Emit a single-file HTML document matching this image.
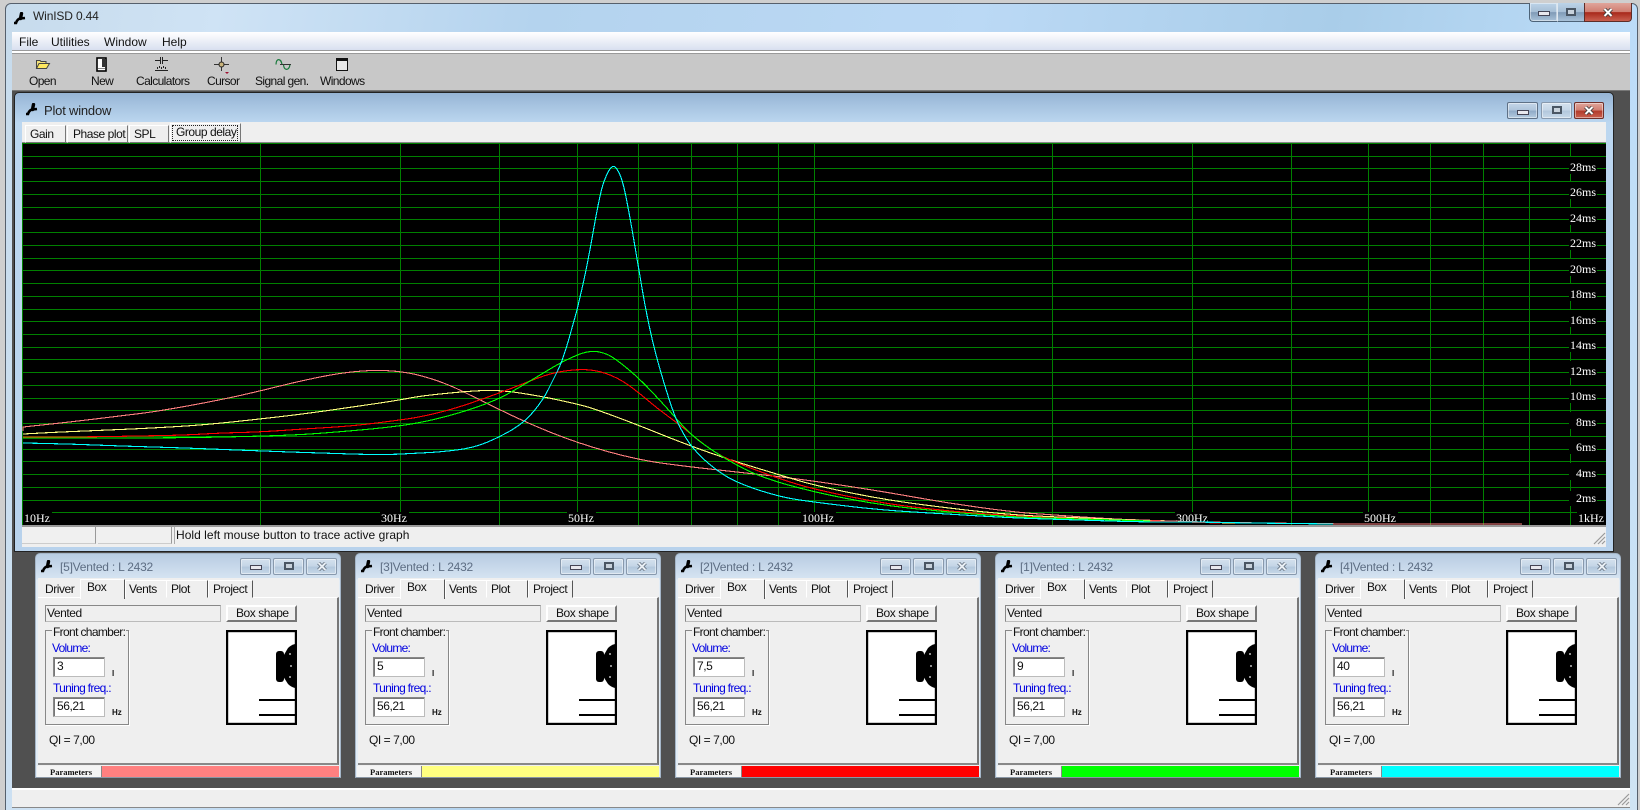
<!DOCTYPE html>
<html><head><meta charset="utf-8"><title>WinISD 0.44</title>
<style>
html,body{margin:0;padding:0;background:#cfcfcf;width:1640px;height:810px;overflow:hidden}
body{position:relative;font-family:"Liberation Sans",sans-serif;font-size:11px;color:#111}
div,span,svg{position:absolute;box-sizing:border-box}
.t{white-space:nowrap;line-height:14px;letter-spacing:-.2px}
#main{left:5px;top:3px;width:1633px;height:810px;border:1px solid #56606c;border-radius:6px 6px 0 0;background:linear-gradient(100deg,#c7dbec 0,#cfe3f5 12%,#b4d3ee 30%,#bbd9f5 55%,#a9cde9 75%,#bcdcf8 92%,#d0e4f4 100%)}
#menu{left:12px;top:32px;width:1618px;height:19px;background:linear-gradient(#fff,#f3f5fa 30%,#d6deef);}
#lines{left:12px;top:50px;width:1618px;height:4px;background:#fff;border-top:1px solid #9a9a9a;border-bottom:1px solid #9a9a9a}
#tool{left:12px;top:54px;width:1618px;height:37px;background:#c8c8c8;border-bottom:1px solid #777}
#mdi{left:12px;top:91px;width:1618px;height:697px;background:#505050}
#status{left:12px;top:788px;width:1618px;height:20px;background:#efefef;border-top:2px solid #fff;border-bottom:1px solid #888}
.menu{font-size:12px;top:35px;letter-spacing:0}
.lab{top:74px;font-size:12px;letter-spacing:-.6px}
#plot{left:14px;top:92px;width:1600px;height:460px;border:1px solid #222;border-radius:5px 5px 0 0;background:linear-gradient(#96b4d4 0,#a6c3e0 12px,#bcd7f0 30px,#b8d2ec 100%)}
.tab{background:#efefef;border:1px solid;border-color:#fff #777 #777 #fff}
.tb{border:1px solid #5f7186;border-radius:2px;background:linear-gradient(#c4d6e8,#aec4db 50%,#8ea9c6 52%,#b4cbe0);box-shadow:inset 0 0 0 1px rgba(255,255,255,.45)}
.tb.c{background:linear-gradient(#e0a59b,#cf7d70 50%,#b23a2a 52%,#c9604f);border-color:#70302a}
.tb.i{border-color:#8899ad;background:linear-gradient(#d4e1ee,#c4d5e6 50%,#b2c7dc 52%,#c8d9e9)}
.g{width:12px;height:5px;left:50%;margin-left:-6px;background:#e8e8ee;border:1px solid #445}
.m{width:10px;height:8px;left:50%;margin-left:-5px;background:#c8d2dc;border:2px solid #4a5664}
.ix{left:50%;margin-left:-5px;width:10px;height:9px}
.w{top:553px;width:306px;height:225px;border-radius:5px 5px 0 0;background:linear-gradient(#b8cce2 0,#d6e4f2 25px,#e2ecf5 26px,#e2ecf5 100%);border:1px solid #a5b6c8;border-bottom-color:#8a97a5}
.in{left:2px;top:24px;width:301px;height:198px;background:#efefef;}
.ttl{left:24px;top:6px;font-size:12px;color:#5d6d83;letter-spacing:-.22px}
.wt{border:1px solid;border-color:#fff #555 transparent #fff;background:#efefef}
.tx{font-size:12px;letter-spacing:-.45px}
.bl{color:#0000e0}
.fld{border:1px solid #888;border-right-color:#bbb;border-bottom-color:#bbb;background:#fff;box-shadow:inset 1px 1px 0 #777}
.s{font:bold 8px/8px "Liberation Sans",sans-serif;letter-spacing:0}
.pm{left:14px;top:214px;font:bold 8.5px/9px "Liberation Serif",serif;white-space:nowrap}
.p{left:66px;top:212px;width:237px;height:11px}
.pl{left:1px;top:212px;width:65px;height:11px;background:#f4f4f4;border-right:1px solid #888}
</style></head>
<body>
<svg width="0" height="0" style="left:0;top:0"><defs>
<symbol id="wr" viewBox="0 0 13 13"><path d="M1 11H3Q4 7.5 7 6.5L12 6" fill="none" stroke="#000" stroke-width="2.6"/><path d="M7.5 6.5L8.5 1.5" stroke="#000" stroke-width="3.4" stroke-linecap="round"/></symbol>
<symbol id="xw" viewBox="0 0 10 9"><path d="M1.5 1L8.5 8M8.5 1L1.5 8" stroke="#333" stroke-width="3.6" fill="none"/><path d="M1.5 1L8.5 8M8.5 1L1.5 8" stroke="#fff" stroke-width="2" fill="none"/></symbol>
<symbol id="xi" viewBox="0 0 10 9"><path d="M1.5 1L8.5 8M8.5 1L1.5 8" stroke="#5a6878" stroke-width="3.6" fill="none"/><path d="M1.5 1L8.5 8M8.5 1L1.5 8" stroke="#e8eef4" stroke-width="2" fill="none"/></symbol>
<symbol id="box" viewBox="0 0 71 95"><rect x="1" y="1" width="69" height="93" fill="#fff" stroke="#000" stroke-width="2.4"/><rect x="50" y="21" width="8" height="31" rx="3" fill="#000"/><path d="M55 30L62 18Q65 15 69 14V58Q65 57 62 54L55 43Z" fill="#000"/><circle cx="64" cy="24" r="1" fill="#bbb"/><circle cx="65" cy="36" r="1" fill="#bbb"/><circle cx="64" cy="47" r="1" fill="#bbb"/><path d="M33 70H69M33 85H69" stroke="#000" stroke-width="2"/></symbol>
</defs></svg>
<div id="main"></div>
<div style="left:1529px;top:3px;width:28px;height:19px;border:1px solid #4d6378;border-top:0;border-right:0;border-radius:0 0 0 4px;background:linear-gradient(#bcd3e8,#a6bed5 50%,#7f9ab6 52%,#a9c2d9);box-shadow:inset 0 0 0 1px rgba(255,255,255,.45)"><div class="g" style="top:8px"></div></div>
<div style="left:1557px;top:3px;width:27px;height:19px;border-bottom:1px solid #4d6378;border-left:1px solid #dfe8f0;background:linear-gradient(#bcd3e8,#a6bed5 50%,#7f9ab6 52%,#a9c2d9)"><div class="m" style="top:5px"></div></div>
<div style="left:1584px;top:3px;width:48px;height:19px;border:1px solid #5d2d28;border-top:0;border-radius:0 0 4px 0;background:linear-gradient(#e0a59b,#cf7d70 50%,#a8281a 52%,#c9604f)"><svg class="ix" style="top:5px"><use href="#xw"/></svg></div>
<svg style="left:13px;top:12px" width="13" height="13"><use href="#wr"/></svg>
<div class="t" style="left:33px;top:9px;font-size:12px;color:#222;letter-spacing:-.15px">WinISD 0.44</div>

<div id="menu"></div><div id="lines"></div><div id="tool"></div><div id="mdi"></div><div id="status"></div>
<svg style="left:1617px;top:793px" width="13" height="13" viewBox="0 0 13 13"><path d="M12 1L1 12M12 5L5 12M12 9L9 12" stroke="#999" stroke-width="1.2"/></svg>
<div class="t menu" style="left:19px">File</div>
<div class="t menu" style="left:51px">Utilities</div>
<div class="t menu" style="left:104px">Window</div>
<div class="t menu" style="left:162px">Help</div>

<svg style="left:34px;top:58px" width="17" height="13" viewBox="0 0 17 13"><path d="M2.5 10.5V2.5H6L7 3.5H12V5.5" fill="#f4e27a" stroke="#444"/><path d="M2.5 10.5L5 5.5H15.5L12.5 10.5Z" fill="#ffe860" stroke="#444"/></svg>
<svg style="left:96px;top:57px" width="11" height="15" viewBox="0 0 11 15"><rect x="1" y="1" width="9" height="13" fill="#fff" stroke="#000" stroke-width="1.6"/><rect x="6" y="2" width="3" height="8" fill="#333"/><rect x="2" y="11" width="7" height="1" fill="#888"/></svg>
<svg style="left:154px;top:57px" width="15" height="14" viewBox="0 0 15 14" shape-rendering="crispEdges"><path d="M1 3.5H6M9 3.5H14M6.5 0V7M8.5 0V7M1 13.5H14" stroke="#222" fill="none"/><path d="M3 11h1M5 10h1M7 11h1M9 10h1M11 11h1" stroke="#222" stroke-width="2"/></svg>
<svg style="left:214px;top:57px" width="16" height="17" viewBox="0 0 16 17"><path d="M7.5 0V14M0 7.5H15" stroke="#333"/><circle cx="7.5" cy="7.5" r="2.5" fill="#c9b37a" stroke="#222"/><path d="M11 15h4l-2 2z" fill="#a01030"/></svg>
<svg style="left:275px;top:58px" width="16" height="13" viewBox="0 0 16 13"><path d="M1 6.5C1 0 6 0 7 6.5M8.5 6.5C9 13 14 13 15 6.5" fill="none" stroke="#187a3c" stroke-width="1.2"/><path d="M5 6.5H16" stroke="#333"/></svg>
<svg style="left:336px;top:58px" width="13" height="14" viewBox="0 0 13 14" shape-rendering="crispEdges"><rect x=".5" y=".5" width="11" height="12" fill="#e8e8e8" stroke="#111"/><rect x="1" y="1" width="10" height="2" fill="#111"/></svg>
<div class="t lab" style="left:29px">Open</div>
<div class="t lab" style="left:91px">New</div>
<div class="t lab" style="left:136px">Calculators</div>
<div class="t lab" style="left:207px">Cursor</div>
<div class="t lab" style="left:255px">Signal gen.</div>
<div class="t lab" style="left:320px">Windows</div>

<div id="plot"></div>
<svg style="left:25px;top:103px" width="13" height="13"><use href="#wr"/></svg>
<div class="t" style="left:44px;top:104px;font-size:13px;color:#222;letter-spacing:-.2px">Plot window</div>
<div class="tb" style="left:1507px;top:102px;width:31px;height:17px"><div class="g" style="top:7px"></div></div>
<div class="tb i" style="left:1541px;top:102px;width:31px;height:17px"><div class="m" style="top:3px"></div></div>
<div class="tb c" style="left:1574px;top:102px;width:30px;height:17px"><svg class="ix" style="top:3px"><use href="#xw"/></svg></div>

<div style="left:22px;top:122px;width:1584px;height:21px;background:#efefef;border-bottom:1px solid #888"></div>
<div class="tab" style="left:25px;top:125px;width:41px;height:18px"></div>
<div class="tab" style="left:67px;top:125px;width:61px;height:18px"></div>
<div class="tab" style="left:129px;top:125px;width:40px;height:18px"></div>
<div class="tab" style="left:170px;top:123px;width:71px;height:20px"></div>
<div style="left:172px;top:125px;width:66px;height:16px;border:1px dotted #222"></div>
<div class="t tx" style="left:30px;top:127px">Gain</div>
<div class="t tx" style="left:73px;top:127px">Phase plot</div>
<div class="t tx" style="left:134px;top:127px">SPL</div>
<div class="t tx" style="left:176px;top:125px">Group delay</div>

<svg style="left:0;top:0" width="1640" height="810" viewBox="0 0 1640 810">
<rect x="22" y="143" width="1584" height="382" fill="#000"/>
<g shape-rendering="crispEdges" stroke="#008000" stroke-width="1" fill="none">
<path d="M22 143.5H1606M22 156.5H1606M22 168.5H1606M22 181.5H1606M22 194.5H1606M22 207.5H1606M22 219.5H1606M22 232.5H1606M22 245.5H1606M22 258.5H1606M22 270.5H1606M22 283.5H1606M22 296.5H1606M22 309.5H1606M22 321.5H1606M22 334.5H1606M22 347.5H1606M22 359.5H1606M22 372.5H1606M22 385.5H1606M22 398.5H1606M22 410.5H1606M22 423.5H1606M22 436.5H1606M22 449.5H1606M22 461.5H1606M22 474.5H1606M22 487.5H1606M22 500.5H1606M22 512.5H1606"/>
<path d="M22.5 143V525M260.5 143V525M400.5 143V525M499.5 143V525M577.5 143V525M638.5 143V525M691.5 143V525M737.5 143V525M778.5 143V525M814.5 143V525M1052.5 143V525M1192.5 143V525M1291.5 143V525M1368.5 143V525M1430.5 143V525M1483.5 143V525M1529.5 143V525M1570.5 143V525"/>
</g>
<g fill="#000">
<rect x="1569" y="157" width="28" height="17"/><rect x="1569" y="182" width="28" height="17"/><rect x="1569" y="208" width="28" height="17"/><rect x="1569" y="233" width="28" height="17"/><rect x="1569" y="259" width="28" height="17"/><rect x="1569" y="284" width="28" height="17"/><rect x="1569" y="310" width="28" height="17"/><rect x="1569" y="335" width="28" height="17"/><rect x="1569" y="361" width="28" height="17"/><rect x="1569" y="386" width="28" height="17"/><rect x="1569" y="412" width="28" height="17"/><rect x="1569" y="437" width="28" height="17"/><rect x="1569" y="463" width="28" height="17"/><rect x="1569" y="491" width="28" height="15"/>
<rect x="23" y="512" width="29" height="13"/><rect x="380" y="512" width="29" height="13"/><rect x="567" y="512" width="29" height="13"/><rect x="801" y="512" width="35" height="13"/><rect x="1175" y="512" width="35" height="13"/><rect x="1363" y="512" width="35" height="13"/><rect x="1577" y="512" width="29" height="13"/>
</g>
<g font-family="'Liberation Serif',serif" font-size="12" fill="#fff">
<text x="1596" y="171" text-anchor="end">28ms</text><text x="1596" y="196" text-anchor="end">26ms</text><text x="1596" y="222" text-anchor="end">24ms</text><text x="1596" y="247" text-anchor="end">22ms</text><text x="1596" y="273" text-anchor="end">20ms</text><text x="1596" y="298" text-anchor="end">18ms</text><text x="1596" y="324" text-anchor="end">16ms</text><text x="1596" y="349" text-anchor="end">14ms</text><text x="1596" y="375" text-anchor="end">12ms</text><text x="1596" y="400" text-anchor="end">10ms</text><text x="1596" y="426" text-anchor="end">8ms</text><text x="1596" y="451" text-anchor="end">6ms</text><text x="1596" y="477" text-anchor="end">4ms</text><text x="1596" y="502" text-anchor="end">2ms</text>
<text x="24" y="522">10Hz</text><text x="381" y="522">30Hz</text><text x="568" y="522">50Hz</text><text x="802" y="522">100Hz</text><text x="1176" y="522">300Hz</text><text x="1364" y="522">500Hz</text><text x="1578" y="522">1kHz</text>
</g>
<g fill="none" stroke-width="1.1" shape-rendering="crispEdges">
<path stroke="#ff8080" d="M23 431V427L46.5 424.5Q70 422 95 419Q120 416 140 413.5Q160 411 190 405.5Q220 400 240 395.5Q260 391 280 386Q300 381 320 377Q340 373 356.5 371.5Q373 370 385 370.5Q397 371 408.5 373Q420 375 435 380Q450 385 465 392.5Q480 400 502.5 411Q525 422 551 432.5Q577 443 607.5 451.5Q638 460 664.5 463.5Q691 467 714 469.5Q737 472 768.5 475.5Q800 479 840 485Q880 491 913.5 497Q947 503 980 507.5Q1013 512 1033 513.5Q1053 515 1083 517Q1113 519 1126.5 519.5Q1140 520 1170 521Q1200 522 1230 522.5Q1260 523 1300 523.5Q1340 524 1400 524L1522 524"/>
<path stroke="#ffff80" d="M23 434L41.5 433Q60 432 85 431Q110 430 131.5 429Q153 428 178 426.5Q203 425 231.5 422Q260 419 281.5 416.5Q303 414 328 410.5Q353 407 376.5 403.5Q400 400 410 398Q420 396 445 393.5Q470 391 485 390.5Q500 390 520 393Q540 396 558.5 400Q577 404 586 406.5Q595 409 616.5 417Q638 425 659 433.5Q680 442 703.5 450.5Q727 459 753.5 467Q780 475 796.5 480Q813 485 846.5 492Q880 499 913.5 503.5Q947 508 980 511.5Q1013 515 1046.5 516.5Q1080 518 1106.5 519Q1133 520 1156.5 521Q1180 522 1210 522.5L1240 523"/>
<path stroke="#ff0000" d="M23 437L51.5 437Q80 437 111.5 436.5Q143 436 165 435.5Q187 435 203.5 434Q220 433 240 432.5Q260 432 281.5 430.5Q303 429 328 427.5Q353 426 376.5 423Q400 420 410 418.5Q420 417 435 413.5Q450 410 465 405Q480 400 495 394.5Q510 389 525 383Q540 377 548.5 374.5Q557 372 568.5 370.5Q580 369 590 370Q600 371 610 375Q620 379 629 385.5Q638 392 648 400.5Q658 409 669 417Q680 425 696.5 438.5Q713 452 725 457.5Q737 463 758.5 471Q780 479 796.5 484Q813 489 846.5 496Q880 503 913.5 507Q947 511 980 513.5Q1013 516 1046.5 517.5Q1080 519 1115 520Q1150 521 1185 522L1220 523"/>
<path stroke="#00ff00" d="M23 438L91.5 438Q160 438 195 437.5Q230 437 263.5 436Q297 435 317 433.5Q337 432 360 430Q383 428 401.5 425.5Q420 423 440 418Q460 413 478.5 406.5Q497 400 508.5 393.5Q520 387 530 381Q540 375 550 369Q560 363 568.5 359Q577 355 581.5 353.5Q586 352 590.5 351.5Q595 351 599.5 352Q604 353 608.5 355Q613 357 625.5 367Q638 377 652.5 392.5Q667 408 673.5 415.5Q680 423 688.5 431.5Q697 440 712 450Q727 460 743.5 468.5Q760 477 786.5 484.5Q813 492 846.5 498.5Q880 505 913.5 508.5Q947 512 980 514.5Q1013 517 1046.5 518Q1080 519 1115 520L1150 521"/>
<path stroke="#00ffff" d="M23 443L46.5 443.5Q70 444 95 445Q120 446 153.5 447Q187 448 223.5 449.5Q260 451 290 452Q320 453 351.5 454Q383 455 401.5 454Q420 453 430 452.5Q440 452 456.5 450Q473 448 486.5 442.5Q500 437 512.5 429.5Q525 422 534 411Q543 400 548 390Q553 380 558 370Q563 360 570 335L577 310L582 288.5Q587 267 593.5 230Q600 193 603.5 183Q607 173 610 169Q614 163 618 171Q622 177 626 197Q630 217 634 241Q638 265 642.5 291Q647 317 652 338.5Q657 360 664.5 384.5Q672 409 676 418.5Q680 428 686 438Q692 448 702.5 458Q713 468 725 475.5Q737 483 758.5 490Q780 497 796.5 499.5Q813 502 846.5 506Q880 510 913.5 512Q947 514 980 516Q1013 518 1046.5 519Q1080 520 1110 521Q1140 522 1170 522Q1200 522 1225 522.5L1250 523L1333 524"/>
</g>
</svg>

<div style="left:22px;top:525px;width:1584px;height:22px;background:#efefef;border-top:2px solid #999"></div>
<div style="left:22px;top:527px;width:74px;height:17px;background:#f0f0f0;border-right:1px solid #999;border-bottom:1px solid #ccc"></div>
<div style="left:98px;top:527px;width:74px;height:17px;background:#f0f0f0;border-right:1px solid #999;border-bottom:1px solid #ccc"></div>
<div style="left:174px;top:527px;width:1432px;height:17px;border-left:1px solid #aaa"></div>
<div class="t" style="left:176px;top:528px;font-size:12px;letter-spacing:.03px">Hold left mouse button to trace active graph</div>
<svg style="left:1593px;top:532px" width="13" height="13" viewBox="0 0 13 13"><path d="M12 1L1 12M12 5L5 12M12 9L9 12" stroke="#999" stroke-width="1.2"/></svg>

<div class="w" style="left:35px">
<div class="in"></div>
<svg style="left:4px;top:6px" width="13" height="13"><use href="#wr"/></svg>
<div class="t ttl">[5]Vented : L 2432</div>
<div class="tb i" style="left:204px;top:4px;width:31px;height:17px"><div class="g" style="top:6px"></div></div>
<div class="tb i" style="left:237px;top:4px;width:31px;height:17px"><div class="m" style="top:3px"></div></div>
<div class="tb i" style="left:270px;top:4px;width:31px;height:17px"><svg class="ix" style="top:3px"><use href="#xi"/></svg></div>
<div style="left:2px;top:43px;width:301px;height:168px;border-top:1px solid #fff;border-right:2px solid #777;border-bottom:2px solid #888"></div>
<div class="wt" style="left:44px;top:25px;width:45px;height:20px;border-bottom:0"></div>
<div class="wt" style="left:89px;top:26px;width:42px;height:18px"></div>
<div class="wt" style="left:130px;top:26px;width:42px;height:18px"></div>
<div class="wt" style="left:172px;top:26px;width:45px;height:18px"></div>
<div class="t tx" style="left:9px;top:28px">Driver</div><div class="t tx" style="left:51px;top:26px">Box</div><div class="t tx" style="left:93px;top:28px">Vents</div><div class="t tx" style="left:135px;top:28px">Plot</div><div class="t tx" style="left:177px;top:28px">Project</div>
<div style="left:9px;top:51px;width:176px;height:17px;border:1px solid #888;border-right-color:#bbb;border-bottom-color:#bbb"></div>
<div class="t tx" style="left:11px;top:52px">Vented</div>
<div style="left:190px;top:51px;width:71px;height:17px;background:#efefef;border:2px solid;border-color:#fff #777 #777 #fff"></div>
<div class="t tx" style="left:200px;top:52px">Box shape</div>
<div style="left:9px;top:76px;width:84px;height:95px;border:1px solid #888;box-shadow:1px 1px 0 #fff"></div>
<div class="t tx" style="left:16px;top:71px;background:#efefef;padding:0 1px;letter-spacing:-.65px">Front chamber:</div>
<div class="t tx bl" style="left:16px;top:87px;letter-spacing:-.75px">Volume:</div>
<div class="fld" style="left:17px;top:103px;width:52px;height:20px"></div>
<div class="t tx" style="left:21px;top:105px">3</div>
<div class="s" style="left:76px;top:116px">l</div>
<div class="t tx bl" style="left:17px;top:127px;letter-spacing:-.7px">Tuning freq.:</div>
<div class="fld" style="left:17px;top:143px;width:52px;height:20px"></div>
<div class="t tx" style="left:21px;top:145px">56,21</div>
<div class="s" style="left:76px;top:155px">Hz</div>
<div class="t tx" style="left:13px;top:179px">QI = 7,00</div>
<svg style="left:190px;top:76px" width="71" height="95"><use href="#box"/></svg>
<div class="pl"></div><div class="pm">Parameters</div>
<div class="p" style="background:#ff8080"></div>
</div>

<div class="w" style="left:355px">
<div class="in"></div>
<svg style="left:4px;top:6px" width="13" height="13"><use href="#wr"/></svg>
<div class="t ttl">[3]Vented : L 2432</div>
<div class="tb i" style="left:204px;top:4px;width:31px;height:17px"><div class="g" style="top:6px"></div></div>
<div class="tb i" style="left:237px;top:4px;width:31px;height:17px"><div class="m" style="top:3px"></div></div>
<div class="tb i" style="left:270px;top:4px;width:31px;height:17px"><svg class="ix" style="top:3px"><use href="#xi"/></svg></div>
<div style="left:2px;top:43px;width:301px;height:168px;border-top:1px solid #fff;border-right:2px solid #777;border-bottom:2px solid #888"></div>
<div class="wt" style="left:44px;top:25px;width:45px;height:20px;border-bottom:0"></div>
<div class="wt" style="left:89px;top:26px;width:42px;height:18px"></div>
<div class="wt" style="left:130px;top:26px;width:42px;height:18px"></div>
<div class="wt" style="left:172px;top:26px;width:45px;height:18px"></div>
<div class="t tx" style="left:9px;top:28px">Driver</div><div class="t tx" style="left:51px;top:26px">Box</div><div class="t tx" style="left:93px;top:28px">Vents</div><div class="t tx" style="left:135px;top:28px">Plot</div><div class="t tx" style="left:177px;top:28px">Project</div>
<div style="left:9px;top:51px;width:176px;height:17px;border:1px solid #888;border-right-color:#bbb;border-bottom-color:#bbb"></div>
<div class="t tx" style="left:11px;top:52px">Vented</div>
<div style="left:190px;top:51px;width:71px;height:17px;background:#efefef;border:2px solid;border-color:#fff #777 #777 #fff"></div>
<div class="t tx" style="left:200px;top:52px">Box shape</div>
<div style="left:9px;top:76px;width:84px;height:95px;border:1px solid #888;box-shadow:1px 1px 0 #fff"></div>
<div class="t tx" style="left:16px;top:71px;background:#efefef;padding:0 1px;letter-spacing:-.65px">Front chamber:</div>
<div class="t tx bl" style="left:16px;top:87px;letter-spacing:-.75px">Volume:</div>
<div class="fld" style="left:17px;top:103px;width:52px;height:20px"></div>
<div class="t tx" style="left:21px;top:105px">5</div>
<div class="s" style="left:76px;top:116px">l</div>
<div class="t tx bl" style="left:17px;top:127px;letter-spacing:-.7px">Tuning freq.:</div>
<div class="fld" style="left:17px;top:143px;width:52px;height:20px"></div>
<div class="t tx" style="left:21px;top:145px">56,21</div>
<div class="s" style="left:76px;top:155px">Hz</div>
<div class="t tx" style="left:13px;top:179px">QI = 7,00</div>
<svg style="left:190px;top:76px" width="71" height="95"><use href="#box"/></svg>
<div class="pl"></div><div class="pm">Parameters</div>
<div class="p" style="background:#ffff80"></div>
</div>

<div class="w" style="left:675px">
<div class="in"></div>
<svg style="left:4px;top:6px" width="13" height="13"><use href="#wr"/></svg>
<div class="t ttl">[2]Vented : L 2432</div>
<div class="tb i" style="left:204px;top:4px;width:31px;height:17px"><div class="g" style="top:6px"></div></div>
<div class="tb i" style="left:237px;top:4px;width:31px;height:17px"><div class="m" style="top:3px"></div></div>
<div class="tb i" style="left:270px;top:4px;width:31px;height:17px"><svg class="ix" style="top:3px"><use href="#xi"/></svg></div>
<div style="left:2px;top:43px;width:301px;height:168px;border-top:1px solid #fff;border-right:2px solid #777;border-bottom:2px solid #888"></div>
<div class="wt" style="left:44px;top:25px;width:45px;height:20px;border-bottom:0"></div>
<div class="wt" style="left:89px;top:26px;width:42px;height:18px"></div>
<div class="wt" style="left:130px;top:26px;width:42px;height:18px"></div>
<div class="wt" style="left:172px;top:26px;width:45px;height:18px"></div>
<div class="t tx" style="left:9px;top:28px">Driver</div><div class="t tx" style="left:51px;top:26px">Box</div><div class="t tx" style="left:93px;top:28px">Vents</div><div class="t tx" style="left:135px;top:28px">Plot</div><div class="t tx" style="left:177px;top:28px">Project</div>
<div style="left:9px;top:51px;width:176px;height:17px;border:1px solid #888;border-right-color:#bbb;border-bottom-color:#bbb"></div>
<div class="t tx" style="left:11px;top:52px">Vented</div>
<div style="left:190px;top:51px;width:71px;height:17px;background:#efefef;border:2px solid;border-color:#fff #777 #777 #fff"></div>
<div class="t tx" style="left:200px;top:52px">Box shape</div>
<div style="left:9px;top:76px;width:84px;height:95px;border:1px solid #888;box-shadow:1px 1px 0 #fff"></div>
<div class="t tx" style="left:16px;top:71px;background:#efefef;padding:0 1px;letter-spacing:-.65px">Front chamber:</div>
<div class="t tx bl" style="left:16px;top:87px;letter-spacing:-.75px">Volume:</div>
<div class="fld" style="left:17px;top:103px;width:52px;height:20px"></div>
<div class="t tx" style="left:21px;top:105px">7,5</div>
<div class="s" style="left:76px;top:116px">l</div>
<div class="t tx bl" style="left:17px;top:127px;letter-spacing:-.7px">Tuning freq.:</div>
<div class="fld" style="left:17px;top:143px;width:52px;height:20px"></div>
<div class="t tx" style="left:21px;top:145px">56,21</div>
<div class="s" style="left:76px;top:155px">Hz</div>
<div class="t tx" style="left:13px;top:179px">QI = 7,00</div>
<svg style="left:190px;top:76px" width="71" height="95"><use href="#box"/></svg>
<div class="pl"></div><div class="pm">Parameters</div>
<div class="p" style="background:#ff0000"></div>
</div>

<div class="w" style="left:995px">
<div class="in"></div>
<svg style="left:4px;top:6px" width="13" height="13"><use href="#wr"/></svg>
<div class="t ttl">[1]Vented : L 2432</div>
<div class="tb i" style="left:204px;top:4px;width:31px;height:17px"><div class="g" style="top:6px"></div></div>
<div class="tb i" style="left:237px;top:4px;width:31px;height:17px"><div class="m" style="top:3px"></div></div>
<div class="tb i" style="left:270px;top:4px;width:31px;height:17px"><svg class="ix" style="top:3px"><use href="#xi"/></svg></div>
<div style="left:2px;top:43px;width:301px;height:168px;border-top:1px solid #fff;border-right:2px solid #777;border-bottom:2px solid #888"></div>
<div class="wt" style="left:44px;top:25px;width:45px;height:20px;border-bottom:0"></div>
<div class="wt" style="left:89px;top:26px;width:42px;height:18px"></div>
<div class="wt" style="left:130px;top:26px;width:42px;height:18px"></div>
<div class="wt" style="left:172px;top:26px;width:45px;height:18px"></div>
<div class="t tx" style="left:9px;top:28px">Driver</div><div class="t tx" style="left:51px;top:26px">Box</div><div class="t tx" style="left:93px;top:28px">Vents</div><div class="t tx" style="left:135px;top:28px">Plot</div><div class="t tx" style="left:177px;top:28px">Project</div>
<div style="left:9px;top:51px;width:176px;height:17px;border:1px solid #888;border-right-color:#bbb;border-bottom-color:#bbb"></div>
<div class="t tx" style="left:11px;top:52px">Vented</div>
<div style="left:190px;top:51px;width:71px;height:17px;background:#efefef;border:2px solid;border-color:#fff #777 #777 #fff"></div>
<div class="t tx" style="left:200px;top:52px">Box shape</div>
<div style="left:9px;top:76px;width:84px;height:95px;border:1px solid #888;box-shadow:1px 1px 0 #fff"></div>
<div class="t tx" style="left:16px;top:71px;background:#efefef;padding:0 1px;letter-spacing:-.65px">Front chamber:</div>
<div class="t tx bl" style="left:16px;top:87px;letter-spacing:-.75px">Volume:</div>
<div class="fld" style="left:17px;top:103px;width:52px;height:20px"></div>
<div class="t tx" style="left:21px;top:105px">9</div>
<div class="s" style="left:76px;top:116px">l</div>
<div class="t tx bl" style="left:17px;top:127px;letter-spacing:-.7px">Tuning freq.:</div>
<div class="fld" style="left:17px;top:143px;width:52px;height:20px"></div>
<div class="t tx" style="left:21px;top:145px">56,21</div>
<div class="s" style="left:76px;top:155px">Hz</div>
<div class="t tx" style="left:13px;top:179px">QI = 7,00</div>
<svg style="left:190px;top:76px" width="71" height="95"><use href="#box"/></svg>
<div class="pl"></div><div class="pm">Parameters</div>
<div class="p" style="background:#00ff00"></div>
</div>

<div class="w" style="left:1315px">
<div class="in"></div>
<svg style="left:4px;top:6px" width="13" height="13"><use href="#wr"/></svg>
<div class="t ttl">[4]Vented : L 2432</div>
<div class="tb i" style="left:204px;top:4px;width:31px;height:17px"><div class="g" style="top:6px"></div></div>
<div class="tb i" style="left:237px;top:4px;width:31px;height:17px"><div class="m" style="top:3px"></div></div>
<div class="tb i" style="left:270px;top:4px;width:31px;height:17px"><svg class="ix" style="top:3px"><use href="#xi"/></svg></div>
<div style="left:2px;top:43px;width:301px;height:168px;border-top:1px solid #fff;border-right:2px solid #777;border-bottom:2px solid #888"></div>
<div class="wt" style="left:44px;top:25px;width:45px;height:20px;border-bottom:0"></div>
<div class="wt" style="left:89px;top:26px;width:42px;height:18px"></div>
<div class="wt" style="left:130px;top:26px;width:42px;height:18px"></div>
<div class="wt" style="left:172px;top:26px;width:45px;height:18px"></div>
<div class="t tx" style="left:9px;top:28px">Driver</div><div class="t tx" style="left:51px;top:26px">Box</div><div class="t tx" style="left:93px;top:28px">Vents</div><div class="t tx" style="left:135px;top:28px">Plot</div><div class="t tx" style="left:177px;top:28px">Project</div>
<div style="left:9px;top:51px;width:176px;height:17px;border:1px solid #888;border-right-color:#bbb;border-bottom-color:#bbb"></div>
<div class="t tx" style="left:11px;top:52px">Vented</div>
<div style="left:190px;top:51px;width:71px;height:17px;background:#efefef;border:2px solid;border-color:#fff #777 #777 #fff"></div>
<div class="t tx" style="left:200px;top:52px">Box shape</div>
<div style="left:9px;top:76px;width:84px;height:95px;border:1px solid #888;box-shadow:1px 1px 0 #fff"></div>
<div class="t tx" style="left:16px;top:71px;background:#efefef;padding:0 1px;letter-spacing:-.65px">Front chamber:</div>
<div class="t tx bl" style="left:16px;top:87px;letter-spacing:-.75px">Volume:</div>
<div class="fld" style="left:17px;top:103px;width:52px;height:20px"></div>
<div class="t tx" style="left:21px;top:105px">40</div>
<div class="s" style="left:76px;top:116px">l</div>
<div class="t tx bl" style="left:17px;top:127px;letter-spacing:-.7px">Tuning freq.:</div>
<div class="fld" style="left:17px;top:143px;width:52px;height:20px"></div>
<div class="t tx" style="left:21px;top:145px">56,21</div>
<div class="s" style="left:76px;top:155px">Hz</div>
<div class="t tx" style="left:13px;top:179px">QI = 7,00</div>
<svg style="left:190px;top:76px" width="71" height="95"><use href="#box"/></svg>
<div class="pl"></div><div class="pm">Parameters</div>
<div class="p" style="background:#00ffff"></div>
</div>
</body></html>
